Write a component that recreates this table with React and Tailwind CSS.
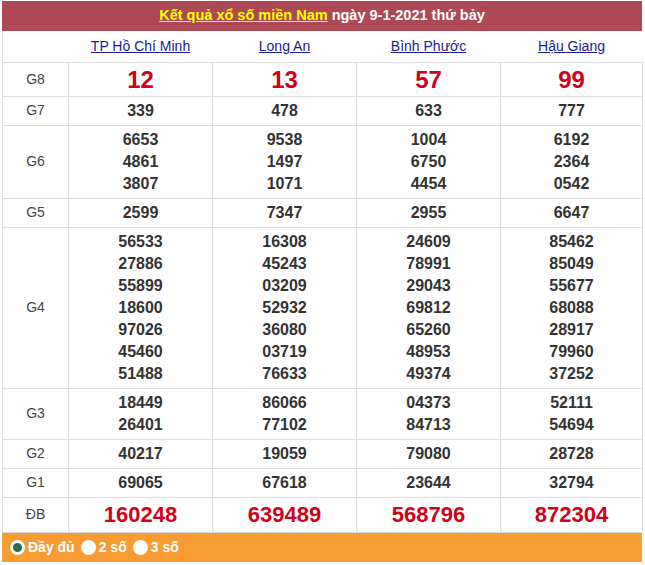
import React from "react";

const provinces = ["TP Hồ Chí Minh", "Long An", "Bình Phước", "Hậu Giang"];

const rows = [
  { label: "G8", big: true, values: [["12"], ["13"], ["57"], ["99"]] },
  { label: "G7", values: [["339"], ["478"], ["633"], ["777"]] },
  {
    label: "G6",
    values: [
      ["6653", "4861", "3807"],
      ["9538", "1497", "1071"],
      ["1004", "6750", "4454"],
      ["6192", "2364", "0542"],
    ],
  },
  { label: "G5", values: [["2599"], ["7347"], ["2955"], ["6647"]] },
  {
    label: "G4",
    values: [
      ["56533", "27886", "55899", "18600", "97026", "45460", "51488"],
      ["16308", "45243", "03209", "52932", "36080", "03719", "76633"],
      ["24609", "78991", "29043", "69812", "65260", "48953", "49374"],
      ["85462", "85049", "55677", "68088", "28917", "79960", "37252"],
    ],
  },
  { label: "G3", values: [["18449", "26401"], ["86066", "77102"], ["04373", "84713"], ["52111", "54694"]] },
  { label: "G2", values: [["40217"], ["19059"], ["79080"], ["28728"]] },
  { label: "G1", values: [["69065"], ["67618"], ["23644"], ["32794"]] },
  { label: "ĐB", special: true, values: [["160248"], ["639489"], ["568796"], ["872304"]] },
];

function Radio({ checked, label }) {
  return (
    <label className="flex items-center gap-[3px] mr-[6px]">
      <span className="w-[15px] h-[15px] rounded-full bg-white flex items-center justify-center">
        {checked && <span className="w-[9px] h-[9px] rounded-full bg-[#2f6b4f]" />}
      </span>
      <span>{label}</span>
    </label>
  );
}

export default function App() {
  return (
    <div className="bg-white w-[645px] h-[565px] pt-[1px] pl-[2px] font-['Liberation_Sans',Arial,sans-serif]">
      <div className="w-[640px]">
        <div className="h-[30px] bg-[#ad4855] flex items-center justify-center text-white font-bold text-[14.5px]">
          <a href="#" className="text-[#ffff00] underline">Kết quả xổ số miền Nam</a>
          <span className="ml-[4px]">ngày 9-1-2021 thứ bảy</span>
        </div>
        <table className="w-[640px] table-fixed border-collapse">
          <colgroup>
            <col className="w-[66px]" />
            <col className="w-[144px]" />
            <col className="w-[144px]" />
            <col className="w-[144px]" />
            <col className="w-[142px]" />
          </colgroup>
          <thead>
            <tr className="h-[31px]">
              <th className="border-b border-l border-[#dddddd]"></th>
              {provinces.map((p) => (
                <th key={p} className="border-b border-[#dddddd] text-center font-normal">
                  <a href="#" className="text-[14px] text-[#1b1b8f] underline">{p}</a>
                </th>
              ))}
            </tr>
          </thead>
          <tbody>
            {rows.map((r) => (
              <tr key={r.label}>
                <td className="border border-[#dddddd] text-center text-[14px] text-[#444444]">{r.label}</td>
                {r.values.map((v, i) => (
                  <td key={i} className="border border-[#dddddd] text-center py-[3px] align-middle">
                    {v.map((n) => (
                      <div
                        key={n}
                        className={
                          r.big
                            ? "text-[24px] leading-[27px] font-bold text-[#d0021b]"
                            : r.special
                            ? "text-[22px] leading-[28px] font-bold text-[#d0021b]"
                            : "text-[16px] leading-[22px] font-bold text-[#333333]"
                        }
                      >
                        {n}
                      </div>
                    ))}
                  </td>
                ))}
              </tr>
            ))}
          </tbody>
        </table>
        <div className="h-[29px] bg-[#f99b33] flex items-center pl-[8px] text-white font-bold text-[14px]">
          <Radio checked label="Đầy đủ" />
          <Radio label="2 số" />
          <Radio label="3 số" />
        </div>
      </div>
    </div>
  );
}
